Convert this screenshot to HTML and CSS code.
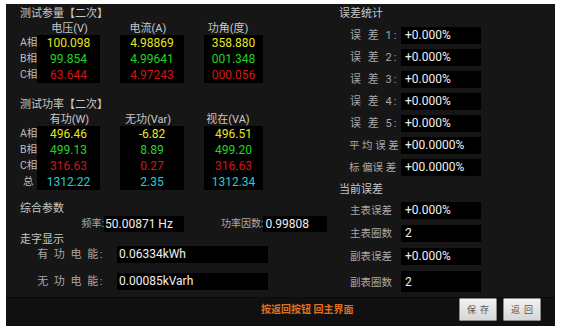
FILE: index.html
```html
<!DOCTYPE html>
<html lang="zh-CN">
<head>
    <meta charset="UTF-8">
    <meta name="viewport" content="width=device-width, initial-scale=1.0">
    <title>测试参量</title>
    <link rel="stylesheet" href="styles.css">
</head>
<body>
    <div class="screen">
        <div class="main">
            <div class="left">
                <div class="title">测试参量【二次】</div>
                <div class="table">
                    <div class="labels">
                        <div>A相</div>
                        <div>B相</div>
                        <div>C相</div>
                    </div>
                    <div class="col col-1">
                        <div class="col-head">电压(V)</div>
                        <div class="col-box">
                            <div class="yellow">100.098</div>
                            <div class="green">99.854</div>
                            <div class="red">63.644</div>
                        </div>
                    </div>
                    <div class="col col-2">
                        <div class="col-head">电流(A)</div>
                        <div class="col-box">
                            <div class="yellow">4.98869</div>
                            <div class="green">4.99641</div>
                            <div class="red">4.97243</div>
                        </div>
                    </div>
                    <div class="col col-3">
                        <div class="col-head">功角(度)</div>
                        <div class="col-box">
                            <div class="yellow">358.880</div>
                            <div class="green">001.348</div>
                            <div class="red">000.056</div>
                        </div>
                    </div>
                </div>

                <div class="title title-gap">测试功率【二次】</div>
                <div class="table">
                    <div class="labels">
                        <div>A相</div>
                        <div>B相</div>
                        <div>C相</div>
                        <div class="total">总</div>
                    </div>
                    <div class="col col-1">
                        <div class="col-head">有功(W)</div>
                        <div class="col-box">
                            <div class="yellow">496.46</div>
                            <div class="green">499.13</div>
                            <div class="red">316.63</div>
                            <div class="cyan">1312.22</div>
                        </div>
                    </div>
                    <div class="col col-2">
                        <div class="col-head">无功(Var)</div>
                        <div class="col-box">
                            <div class="yellow">-6.82</div>
                            <div class="green">8.89</div>
                            <div class="red">0.27</div>
                            <div class="cyan">2.35</div>
                        </div>
                    </div>
                    <div class="col col-3">
                        <div class="col-head">视在(VA)</div>
                        <div class="col-box">
                            <div class="yellow">496.51</div>
                            <div class="green">499.20</div>
                            <div class="red">316.63</div>
                            <div class="cyan">1312.34</div>
                        </div>
                    </div>
                </div>

                <div class="title title-mid">综合参数</div>
                <div class="misc-row">
                    <div class="misc-label freq-label">频率:</div>
                    <div class="value freq-value">50.00871 Hz</div>
                    <div class="misc-label pf-label">功率因数:</div>
                    <div class="value pf-value">0.99808</div>
                </div>

                <div class="title title-tight">走字显示</div>
                <div class="energy-row">
                    <div class="energy-label">有 功 电 能:</div>
                    <div class="value energy-value">0.06334kWh</div>
                </div>
                <div class="energy-row energy-gap">
                    <div class="energy-label">无 功 电 能:</div>
                    <div class="value energy-value">0.00085kVarh</div>
                </div>
            </div>

            <div class="right">
                <div class="title">误差统计</div>
                <div class="stat-list">
                    <div class="stat-row"><span class="stat-label">误 差 1:</span><span class="value stat-value">+0.000%</span></div>
                    <div class="stat-row"><span class="stat-label">误 差 2:</span><span class="value stat-value">+0.000%</span></div>
                    <div class="stat-row"><span class="stat-label">误 差 3:</span><span class="value stat-value">+0.000%</span></div>
                    <div class="stat-row"><span class="stat-label">误 差 4:</span><span class="value stat-value">+0.000%</span></div>
                    <div class="stat-row"><span class="stat-label">误 差 5:</span><span class="value stat-value">+0.000%</span></div>
                    <div class="stat-row"><span class="stat-label wide">平 均 误 差</span><span class="value stat-value">+00.0000%</span></div>
                    <div class="stat-row"><span class="stat-label wide">标 偏误 差</span><span class="value stat-value">+00.0000%</span></div>
                </div>

                <div class="title current-title">当前误差</div>
                <div class="current-list">
                    <div class="stat-row"><span class="cur-label">主表误差</span><span class="value stat-value">+0.000%</span></div>
                    <div class="stat-row"><span class="cur-label">主表圈数</span><span class="value stat-value">2</span></div>
                    <div class="stat-row"><span class="cur-label">副表误差</span><span class="value stat-value">+0.000%</span></div>
                    <div class="stat-row tall"><span class="cur-label">副表圈数</span><span class="value stat-value">2</span></div>
                </div>
            </div>
        </div>

        <div class="footer">
            <div class="hint">按返回按钮 回主界面</div>
            <div class="buttons">
                <button class="btn">保存</button>
                <button class="btn">返回</button>
            </div>
        </div>
    </div>
</body>
</html>
```

FILE: styles.css
```css
body {
    margin: 0;
    background-color: #fff;
    font-family: Roboto, "Noto Sans CJK SC", sans-serif;
}

.screen {
    margin: 4px 0 0 6px;
    width: 549px;
    height: 322px;
    background-color: #161616;
    display: flex;
    flex-direction: column;
}

.main {
    flex: 1;
    display: flex;
}

.left {
    width: 315px;
    padding-left: 14px;
    padding-top: 2px;
}

.right {
    flex: 1;
    padding-left: 4px;
    padding-top: 2px;
}

.title {
    font-size: 11px;
    line-height: 16px;
    color: #c8c8c8;
    white-space: nowrap;
}

.title-gap {
    margin-top: 14px;
}

.title-mid {
    margin-top: 12px;
    line-height: 14px;
}

.title-tight {
    margin-top: 2px;
    line-height: 12px;
}

/* tables */
.table {
    display: flex;
}

.labels {
    width: 17px;
    flex-shrink: 0;
    padding-top: 13px;
    font-size: 10.5px;
    color: #bdbdbd;
    white-space: nowrap;
}

.labels div {
    height: 16px;
    line-height: 16px;
}

.labels .total {
    padding-left: 3px;
}

.col {
    flex-shrink: 0;
}

.col-head {
    height: 13px;
    line-height: 13px;
    font-size: 11px;
    color: #c8c8c8;
    text-align: center;
    white-space: nowrap;
}

.col-1 {
    width: 63px;
}

.col-2 {
    width: 64px;
    margin-left: 20px;
}

.col-3 {
    width: 59px;
    margin-left: 20px;
}

.col-1 .col-head {
    padding-left: 2px;
}

.col-2 .col-head {
    margin-right: 8px;
}

.col-3 .col-head {
    margin-right: 11px;
}

.col-box {
    background-color: #000;
}

.col-box div {
    height: 16px;
    line-height: 16px;
    font-size: 12px;
    text-align: center;
}

.yellow { color: #e6e61e; }
.green { color: #22d422; }
.red { color: #d41616; }
.cyan { color: #26cdd6; }

/* value boxes */
.value {
    background-color: #000;
    color: #f0f0f0;
    font-size: 12px;
    white-space: nowrap;
    flex-shrink: 0;
}

.misc-row {
    display: flex;
    height: 16px;
    line-height: 16px;
}

.misc-label {
    font-size: 10px;
    color: #a8a8a8;
    white-space: nowrap;
    flex-shrink: 0;
}

.freq-label {
    width: 84px;
    text-align: right;
}

.freq-value {
    width: 79px;
    padding-left: 1px;
}

.pf-label {
    margin-left: 37px;
}

.pf-value {
    width: 62px;
    padding-left: 2px;
}

.energy-row {
    display: flex;
    height: 17px;
    line-height: 17px;
}

.energy-gap {
    margin-top: 10px;
}

.energy-label {
    width: 84px;
    flex-shrink: 0;
    text-align: right;
    font-size: 11px;
    color: #a8a8a8;
    letter-spacing: 1.5px;
    white-space: nowrap;
}

.energy-value {
    margin-left: 13px;
    width: 149px;
    padding-left: 2px;
}

/* error statistics */
.stat-list {
    margin-top: 5px;
    display: flex;
    flex-direction: column;
    gap: 5px;
}

.current-title {
    margin-top: 7px;
    line-height: 14px;
}

.current-list {
    margin-top: 5px;
    display: flex;
    flex-direction: column;
    gap: 6px;
}

.stat-row {
    display: flex;
    height: 17px;
    line-height: 17px;
}

.stat-row.tall {
    height: 21px;
    line-height: 23px;
}

.stat-label {
    width: 57px;
    flex-shrink: 0;
    padding-left: 11px;
    box-sizing: border-box;
    font-size: 11px;
    color: #a8a8a8;
    letter-spacing: 2px;
    white-space: nowrap;
}

.stat-label.wide {
    padding-left: 10px;
    font-size: 10.5px;
    letter-spacing: 0;
}

.cur-label {
    width: 57px;
    flex-shrink: 0;
    padding-left: 11px;
    box-sizing: border-box;
    font-size: 10.5px;
    color: #a8a8a8;
    white-space: nowrap;
}

.stat-value {
    margin-left: 5px;
    width: 76px;
    padding-left: 4px;
}

/* footer */
.footer {
    height: 29px;
    box-sizing: border-box;
    border-top: 1px solid #0a0a0a;
    background-color: #101010;
    display: flex;
    align-items: flex-start;
}

.hint {
    margin-left: 255px;
    line-height: 23px;
    font-size: 10px;
    font-weight: bold;
    color: #e0701c;
}

.buttons {
    margin-left: auto;
    margin-right: 14px;
    display: flex;
    gap: 6px;
}

.btn {
    width: 38px;
    height: 23px;
    padding: 0;
    background: linear-gradient(#f2f2f2, #d6d6d6);
    border: 1px solid #8a8a8a;
    border-radius: 1px;
    font-family: "Noto Sans CJK SC", sans-serif;
    font-size: 9px;
    letter-spacing: 4px;
    text-indent: 4px;
    color: #555;
}
```
